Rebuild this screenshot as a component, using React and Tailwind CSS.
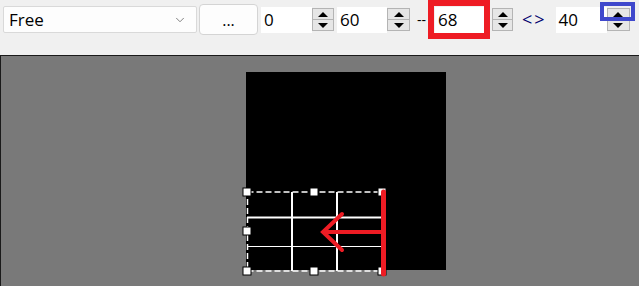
import { ChevronDown } from 'lucide-react';

function Spinner({ className = '' }) {
  return (
    <div className={'flex h-[23px] flex-col border border-[#b4b4b4] bg-[#e6e6e6] ' + className}>
      <div className="flex flex-1 items-center justify-center border-b border-[#b4b4b4]">
        <div className="h-0 w-0 border-x-[5px] border-b-[5px] border-x-transparent border-b-black" />
      </div>
      <div className="flex flex-1 items-center justify-center">
        <div className="h-0 w-0 border-x-[5px] border-t-[5px] border-x-transparent border-t-black" />
      </div>
    </div>
  );
}

function SpinBox({ value, inputW, spinW, gap = '' }) {
  return (
    <div className="flex h-[26px] items-center">
      <div
        className="flex h-[26px] items-center bg-white pl-[3px] text-[17px] text-black"
        style={{ width: inputW }}
      >
        {value}
      </div>
      <Spinner className={spinW + ' ' + gap} />
    </div>
  );
}

export default function App() {
  return (
    <div
      className="flex h-[286px] w-[639px] flex-col overflow-hidden bg-[#f0f0f0]"
      style={{ fontFamily: '"Open Sans", "Noto Sans", sans-serif' }}
    >
      {/* toolbar */}
      <div className="relative h-[55px] shrink-0">
        <div className="flex h-[39px] items-center">
          <div className="ml-[3px] flex h-[27px] w-[194px] items-center justify-between rounded-[2px] border border-[#d9d9d9] bg-[#fdfdfd] pl-[5px] pr-[9px] text-[17px] text-black">
            <span>Free</span>
            <ChevronDown size={14} strokeWidth={1.5} className="text-[#707070]" />
          </div>
          <div className="ml-[2px] flex h-[31px] w-[59px] items-center justify-center rounded-[4px] border border-[#d4d4d4] bg-[#fdfdfd] text-[16px] text-black">
            ...
          </div>
          <div className="ml-[3px]">
            <SpinBox value="0" inputW={51} spinW="w-[22px]" />
          </div>
          <div className="ml-[3px]">
            <SpinBox value="60" inputW={50} spinW="w-[23px]" />
          </div>
          <span className="ml-[7px] w-[10px] text-[14px] text-black">--</span>
          <div className="ml-[8px]">
            <SpinBox value="68" inputW={55} spinW="w-[21px]" gap="ml-[2px]" />
          </div>
          <span className="ml-[9px] text-[18px] tracking-[2px] text-[#00006e]">&lt;&gt;</span>
          <div className="ml-[9px]">
            <SpinBox value="40" inputW={51} spinW="w-[23px]" />
          </div>
        </div>
        {/* annotation boxes */}
        <div className="absolute left-[428px] top-0 h-[39px] w-[62px] border-[6px] border-[#ee1c24]" />
        <div className="absolute left-[600px] top-[2px] h-[19px] w-[35px] border-[4px] border-[#3f48cc]" />
      </div>

      {/* canvas */}
      <div className="relative flex-1 border-l border-t border-[#1a1a1a] bg-[#797979]">
        <div className="absolute left-[245px] top-[16px] h-[198px] w-[200px] bg-black" />
        <svg className="absolute left-0 top-0" width="639" height="231" viewBox="0 55 639 231">
          {/* grid */}
          <line x1="246" y1="216.5" x2="381" y2="216.5" stroke="#fff" strokeWidth="2" />
          <line x1="246" y1="245.5" x2="381" y2="245.5" stroke="#fff" strokeWidth="1" />
          <line x1="291" y1="191" x2="291" y2="270" stroke="#fff" strokeWidth="2" />
          <line x1="336" y1="191" x2="336" y2="270" stroke="#fff" strokeWidth="2" />
          {/* dashed selection */}
          <rect x="246.5" y="191" width="134.5" height="79" fill="none" stroke="#fff" strokeWidth="1.5" strokeDasharray="6 3" />
          {/* handles */}
          {[
            [246, 191],
            [313, 191],
            [381, 191],
            [246, 230],
            [246, 270],
            [313, 270],
            [381, 270],
          ].map(([x, y]) => (
            <rect key={x + '-' + y} x={x - 4} y={y - 4} width="8" height="8" fill="#fff" stroke="#000" strokeWidth="1" />
          ))}
          {/* red arrow */}
          <line x1="382.5" y1="191" x2="382.5" y2="273" stroke="#ee1c24" strokeWidth="5" strokeLinecap="round" />
          <line x1="381" y1="231" x2="323" y2="231" stroke="#ee1c24" strokeWidth="4" />
          <polyline points="341,213 322,231 341,249" fill="none" stroke="#ee1c24" strokeWidth="4" strokeLinecap="round" />
        </svg>
      </div>
    </div>
  );
}
